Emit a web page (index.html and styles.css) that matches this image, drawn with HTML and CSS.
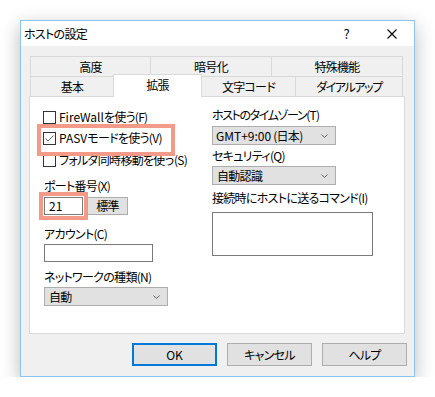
FILE: index.html
```html
<!DOCTYPE html>
<html lang="ja">
<head>
<meta charset="utf-8">
<title>ホストの設定</title>
<link rel="stylesheet" href="styles.css">
</head>
<body>
<div class="dialog">
  <div class="titlebar">
    <span class="title">ホストの設定</span>
    <span class="cap-btn">?</span>
    <span class="cap-btn"><svg width="10" height="10" viewBox="0 0 10 10"><path d="M0.5 0.5L9.5 9.5M9.5 0.5L0.5 9.5" stroke="#000" stroke-width="1.1" fill="none"/></svg></span>
  </div>
  <div class="body">
    <div class="tabs">
      <div class="tabrow">
        <div class="tab first w121">高度</div>
        <div class="tab w121">暗号化</div>
        <div class="tab w131">特殊機能</div>
      </div>
      <div class="tabrow">
        <div class="tab first w84">基本</div>
        <div class="tab selected">拡張</div>
        <div class="tab w94">文字コード</div>
        <div class="tab w107"><span class="kana">ダイアルアップ</span></div>
      </div>
    </div>
    <div class="panel">
      <div class="col left">
        <div class="cb cb1"><span class="box"></span><span><span class="latin">FireWall</span>を使う(F)</span></div>
        <div class="cb cb2 hl"><span class="box"><svg width="11" height="11" viewBox="0 0 11 11"><path d="M1.5 5.5L4 8L9.5 2.5" stroke="#666" stroke-width="1" fill="none"/></svg></span><span><span class="latin">PASV</span>モードを使う(V)</span></div>
        <div class="cb cb3"><span class="box"></span><span>フォルダ同時移動を使う(S)</span></div>
        <div class="lbl port-lbl">ポート番号(X)</div>
        <div class="port-row">
          <div class="field port">21</div>
          <div class="mini-btn">標準</div>
        </div>
        <div class="lbl acc-lbl">アカウント(C)</div>
        <div class="field account"></div>
        <div class="lbl net-lbl">ネットワークの種類(N)</div>
        <div class="select net"><span>自動</span><svg width="7" height="4" viewBox="0 0 7 4"><path d="M0.5 0.5L3.5 3.5L6.5 0.5" stroke="#606060" stroke-width="1" fill="none"/></svg></div>
      </div>
      <div class="col right">
        <div class="lbl"><span class="kana">ホストのタイムゾーン</span>(T)</div>
        <div class="select tz"><span><span class="latin">GMT+9:00</span> (日本)</span><svg width="7" height="4" viewBox="0 0 7 4"><path d="M0.5 0.5L3.5 3.5L6.5 0.5" stroke="#606060" stroke-width="1" fill="none"/></svg></div>
        <div class="lbl sec-lbl">セキュリティ(Q)</div>
        <div class="select sec"><span>自動認識</span><svg width="7" height="4" viewBox="0 0 7 4"><path d="M0.5 0.5L3.5 3.5L6.5 0.5" stroke="#606060" stroke-width="1" fill="none"/></svg></div>
        <div class="lbl cmd-lbl">接続時にホストに送るコマンド(I)</div>
        <div class="field cmd"></div>
      </div>
    </div>
    <div class="buttons">
      <div class="btn default">OK</div>
      <div class="btn">キャンセル</div>
      <div class="btn">ヘルプ</div>
    </div>
  </div>
</div>
</body>
</html>
```
FILE: styles.css
```css
* { box-sizing: border-box; }
body {
  margin: 0;
  padding: 20px 0 0 20px;
  background: #fff;
  font-family: "Noto Sans CJK JP", "Noto Sans", sans-serif;
  font-size: 12px;
  color: #000;
  letter-spacing: -0.7px;
  font-feature-settings: "palt";
}
.latin { letter-spacing: 0; }
.kana { letter-spacing: -1.4px; }
.dialog {
  width: 395px;
  height: 357px;
  border: 1px solid #8cc3ef;
  background: #f0f0f0;
  box-shadow: 0 6px 18px rgba(0, 0, 0, 0.28);
  display: flex;
  flex-direction: column;
}
.titlebar {
  height: 25px;
  background: #fff;
  display: flex;
  align-items: center;
  padding-left: 3px;
}
.title { flex: 1; line-height: 16px; }
.cap-btn {
  width: 45px;
  height: 25px;
  display: flex;
  align-items: center;
  justify-content: center;
  font-size: 13px;
  letter-spacing: 0;
}
.body {
  flex: 1;
  padding: 10px 9px 10px 8px;
  display: flex;
  flex-direction: column;
}
.tabs { margin-left: 1px; width: 373px; }
.tabrow { display: flex; height: 20px; }
.tab {
  height: 20px;
  border-top: 1px solid #d9d9d9;
  border-right: 1px solid #d9d9d9;
  background: #f0f0f0;
  display: flex;
  align-items: center;
  justify-content: center;
  line-height: 16px;
}
.tab.first { border-left: 1px solid #d9d9d9; }
.w121 { width: 121px; }
.w131 { width: 131px; }
.w84 { width: 84px; }
.w94 { width: 94px; }
.w107 { width: 107px; }
.tab.selected {
  width: 89px;
  height: 23px;
  margin-top: -2px;
  margin-left: -1px;
  padding-bottom: 3px;
  border-left: 1px solid #d9d9d9;
  background: #fff;
  position: relative;
  z-index: 1;
}
.panel {
  height: 238px;
  border: 1px solid #d9d9d9;
  background: #fff;
  padding: 10px 0 0 14px;
  display: flex;
}
.col { display: flex; flex-direction: column; align-items: flex-start; }
.col.left { width: 168px; }
.lbl { line-height: 16px; height: 16px; white-space: nowrap; }
.cb {
  display: flex;
  align-items: center;
  gap: 3px;
  height: 16px;
  line-height: 16px;
  margin-left: -1px;
  white-space: nowrap;
}
.cb1 { margin-top: 2px; }
.cb2 { margin-top: 5px; }
.cb3 { margin-top: 6px; }
.box {
  width: 13px;
  height: 13px;
  border: 1px solid #333;
  background: #fff;
  display: flex;
}
.hl { position: relative; }
.hl::after {
  content: "";
  position: absolute;
  left: -6px;
  top: -6px;
  width: 130px;
  height: 24px;
  border: 4px solid #f49a88;
}
.port-lbl { margin-top: 10px; }
.port-row { display: flex; margin-top: 3px; }
.field {
  height: 18px;
  border: 1px solid #7a7a7a;
  background: #fff;
  padding-left: 4px;
  line-height: 16px;
}
.port { width: 39px; outline: 4px solid #f49a88; outline-offset: 1px; letter-spacing: 0; }
.mini-btn {
  width: 41px;
  height: 18px;
  margin-left: 4px;
  border: 1px solid #adadad;
  background: #e1e1e1;
  display: flex;
  align-items: center;
  justify-content: center;
  line-height: 16px;
}
.acc-lbl { margin-top: 11px; }
.account { width: 109px; margin-top: 2px; }
.net-lbl { margin-top: 7px; }
.select {
  width: 124px;
  height: 19px;
  border: 1px solid #adadad;
  background: #e1e1e1;
  display: flex;
  align-items: center;
  justify-content: space-between;
  padding: 0 7px 0 3px;
  line-height: 16px;
  white-space: nowrap;
}
.net { margin-top: 2px; padding-left: 4px; }
.tz { margin-top: 3px; }
.sec-lbl { margin-top: 3px; }
.sec { margin-top: 2px; padding-left: 4px; }
.cmd-lbl { margin-top: 5px; }
.cmd { width: 161px; height: 44px; margin-top: 6px; }
.buttons {
  display: flex;
  justify-content: flex-end;
  gap: 10px;
  margin-top: 9px;
  margin-right: -2px;
}
.btn {
  width: 85px;
  height: 23px;
  border: 1px solid #adadad;
  background: #e1e1e1;
  display: flex;
  align-items: center;
  justify-content: center;
  line-height: 16px;
}
.btn.default { border: 2px solid #0078d7; letter-spacing: 0; }
```
